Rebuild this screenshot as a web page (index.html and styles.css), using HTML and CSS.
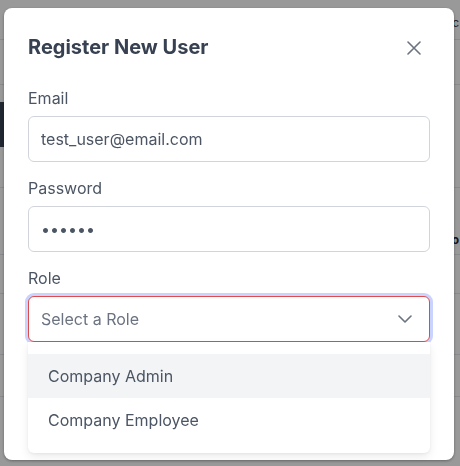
FILE: index.html
```html
<!DOCTYPE html>
<html lang="en">
<head>
<meta charset="utf-8">
<title>Register New User</title>
<link rel="stylesheet" href="styles.css">
</head>
<body>
<div class="page">
  <div class="row row-1"><span class="edge-text">Abc</span></div>
  <div class="row row-2"></div>
  <div class="row row-3"><div class="dark-block"></div></div>
  <div class="row row-4"><span class="edge-text edge-bold">Po</span></div>
  <div class="row row-5"></div>
  <div class="row row-6"></div>
  <div class="row row-7"></div>
  <div class="row row-8"></div>
</div>

<div class="overlay">
  <div class="modal" role="dialog" aria-labelledby="modal-title">
    <div class="modal-header">
      <h2 class="modal-title" id="modal-title">Register New User</h2>
      <button class="close-btn" type="button" aria-label="Close">
        <svg width="14" height="14" viewBox="0 0 14 14" fill="none" stroke="#6b7280" stroke-width="1.6" stroke-linecap="round">
          <path d="M1 1L13 13M13 1L1 13"/>
        </svg>
      </button>
    </div>

    <div class="field">
      <label class="label" for="email">Email</label>
      <input class="input" id="email" type="text" value="test_user@email.com">
    </div>

    <div class="field">
      <label class="label" for="password">Password</label>
      <input class="input input-password" id="password" type="password" value="secret">
    </div>

    <div class="field">
      <label class="label">Role</label>
      <div class="select-wrap">
        <div class="select">
          <span class="select-placeholder">Select a Role</span>
          <svg class="chevron" width="14" height="8" viewBox="0 0 14 8" fill="none" stroke="#6b7280" stroke-width="1.6" stroke-linecap="round" stroke-linejoin="round">
            <path d="M1 1L7 7L13 1"/>
          </svg>
        </div>
        <ul class="menu">
          <li class="menu-item is-active">Company Admin</li>
          <li class="menu-item">Company Employee</li>
        </ul>
      </div>
    </div>
  </div>
</div>
</body>
</html>
```

FILE: styles.css
```css
* {
  box-sizing: border-box;
}

html, body {
  margin: 0;
  padding: 0;
}

body {
  font-family: Inter, "Noto Sans", "DejaVu Sans", sans-serif;
  background: #ffffff;
  width: 460px;
  height: 466px;
  overflow: hidden;
}

/* Underlying page (mostly hidden by the overlay) */
.page {
  display: flex;
  flex-direction: column;
  background: #ffffff;
}

.row {
  display: flex;
  align-items: center;
  justify-content: flex-end;
  border-bottom: 1px solid #e5e7eb;
}

.row-1 { height: 40px; padding-top: 6px; }
.row-2 { height: 45px; }
.row-3 { height: 103px; align-items: flex-start; justify-content: flex-start; }
.row-4 { height: 67px; align-items: flex-end; padding-bottom: 6px; }
.row-5 { height: 39px; }
.row-6 { height: 61px; }
.row-7 { height: 42px; }
.row-8 { height: 70px; border-bottom: none; }

.dark-block {
  margin-top: 17px;
  width: 8px;
  height: 45px;
  background: #374151;
}

.edge-text {
  font-size: 12px;
  color: #374151;
  margin-right: 1px;
  line-height: 16px;
}

.edge-bold {
  font-weight: 700;
  color: #1f2937;
}

/* Overlay + modal */
.overlay {
  position: fixed;
  inset: 0;
  background: rgba(0, 0, 0, 0.4);
  padding: 8px 0 0 4px;
}

.modal {
  width: 450px;
  height: 452px;
  background: #ffffff;
  border-radius: 8px;
  padding: 24px 24px 0 24px;
  box-shadow: 0 1px 3px rgba(0, 0, 0, 0.35);
  display: flex;
  flex-direction: column;
}

.modal-header {
  display: flex;
  justify-content: space-between;
  align-items: flex-start;
  margin-bottom: 26px;
}

.modal-title {
  margin: 2px 0 0 0;
  font-size: 20px;
  line-height: 26px;
  font-weight: 700;
  color: #374151;
}

.close-btn {
  width: 24px;
  height: 24px;
  margin-top: 4px;
  margin-right: 4px;
  padding: 0;
  border: none;
  background: transparent;
  display: flex;
  align-items: center;
  justify-content: center;
  cursor: pointer;
}

.field {
  display: flex;
  flex-direction: column;
  margin-bottom: 14px;
}

.label {
  font-size: 16px;
  line-height: 24px;
  color: #4b5563;
  margin-bottom: 6px;
}

.input {
  height: 46px;
  border: 1px solid #d1d5db;
  border-radius: 6px;
  padding: 0 12px;
  font-family: inherit;
  font-size: 16px;
  color: #4b5563;
  background: #ffffff;
  outline: none;
}

.input-password {
  letter-spacing: 0;
  color: #4b5563;
}

.select-wrap {
  position: relative;
}

.select {
  height: 46px;
  border: 1px solid #df4b4b;
  border-radius: 6px;
  box-shadow: 0 0 0 3px #c9d3fd;
  padding: 0 17px 0 12px;
  display: flex;
  align-items: center;
  justify-content: space-between;
  background: #ffffff;
}

.select-placeholder {
  font-size: 16px;
  color: #6b7280;
}

.chevron {
  display: block;
}

.menu {
  position: absolute;
  top: 100%;
  left: 0;
  right: 0;
  margin: 0;
  padding: 12px 0 11px;
  list-style: none;
  background: #ffffff;
  border-radius: 0 0 6px 6px;
  box-shadow: 0 4px 10px rgba(0, 0, 0, 0.08), 0 1px 3px rgba(0, 0, 0, 0.05);
}

.menu-item {
  height: 44px;
  line-height: 44px;
  padding-left: 20px;
  font-size: 16px;
  color: #4b5563;
}

.menu-item.is-active {
  background: #f3f4f6;
}
```
